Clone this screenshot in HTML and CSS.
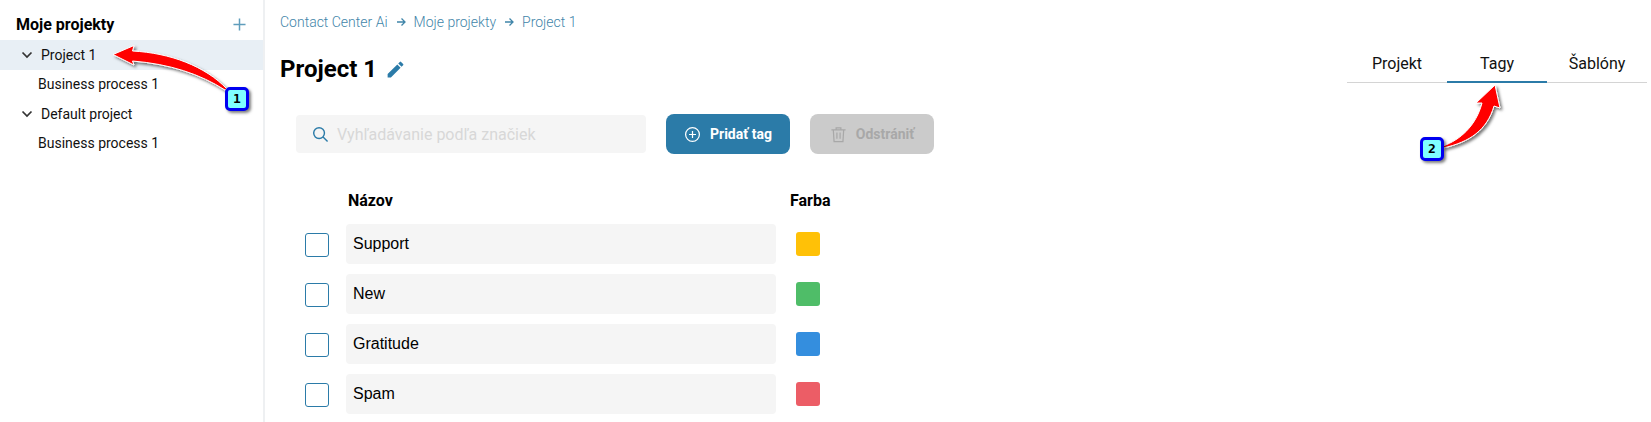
FILE: index.html
```html
<!DOCTYPE html>
<html lang="sk">
<head>
<meta charset="utf-8">
<title>Project 1</title>
<link rel="stylesheet" href="styles.css">
</head>
<body>
<div class="app">
  <aside class="sidebar">
    <div class="side-head">
      <span class="side-title">Moje projekty</span>
      <svg class="plus" viewBox="0 0 14 14"><path d="M7 0.5V13.5M0.5 7H13.5"/></svg>
    </div>
    <div class="tree-row active"><svg class="chev" viewBox="0 0 12 8"><path d="M1.5 1.5L6 6L10.5 1.5"/></svg><span>Project 1</span></div>
    <div class="tree-row child"><span>Business process 1</span></div>
    <div class="tree-row"><svg class="chev" viewBox="0 0 12 8"><path d="M1.5 1.5L6 6L10.5 1.5"/></svg><span>Default project</span></div>
    <div class="tree-row child"><span>Business process 1</span></div>
  </aside>
  <main class="main">
    <nav class="crumbs">
      <span>Contact Center Ai</span>
      <svg class="crumb-arrow" viewBox="0 0 10 10"><path d="M1 5H9M5.5 1.5L9 5L5.5 8.5"/></svg>
      <span>Moje projekty</span>
      <svg class="crumb-arrow" viewBox="0 0 10 10"><path d="M1 5H9M5.5 1.5L9 5L5.5 8.5"/></svg>
      <span>Project 1</span>
    </nav>
    <div class="title-row">
      <h1>Project 1</h1>
      <svg class="pencil" viewBox="0 0 24 24"><path d="M3 17.25V21h3.75L17.81 9.94l-3.75-3.75L3 17.25zM20.71 7.04a1 1 0 0 0 0-1.41l-2.34-2.34a1 1 0 0 0-1.41 0l-1.83 1.83 3.75 3.75 1.83-1.83z"/></svg>
    </div>
    <div class="toolbar">
      <div class="search">
        <svg class="search-icon" viewBox="0 0 18 18"><circle cx="7.5" cy="7.5" r="5.7"/><path d="M11.7 11.7L16.5 16.5"/></svg>
        <span>Vyhľadávanie podľa značiek</span>
      </div>
      <div class="btn primary">
        <svg class="btn-icon" viewBox="0 0 18 18"><circle cx="9" cy="9" r="7.3"/><path d="M9 5.3V12.7M5.3 9H12.7"/></svg>
        <span>Pridať tag</span>
      </div>
      <div class="btn disabled">
        <svg class="btn-icon" viewBox="0 0 18 18"><path d="M1.5 4H16.5M6.5 4V2H11.5V4M3.5 4L4.3 16.5H13.7L14.5 4M7.3 7V13.5M10.7 7V13.5"/></svg>
        <span>Odstrániť</span>
      </div>
    </div>
    <div class="tag-table">
      <div class="tag-head"><span class="head-name">Názov</span><span class="head-color">Farba</span></div>
      <div class="tag-row"><span class="check"></span><div class="field">Support</div><span class="swatch yellow"></span></div>
      <div class="tag-row"><span class="check"></span><div class="field">New</div><span class="swatch green"></span></div>
      <div class="tag-row"><span class="check"></span><div class="field">Gratitude</div><span class="swatch blue"></span></div>
      <div class="tag-row"><span class="check"></span><div class="field">Spam</div><span class="swatch red"></span></div>
    </div>
  </main>
  <div class="tabs">
    <div class="tab">Projekt</div>
    <div class="tab current">Tagy</div>
    <div class="tab">Šablóny</div>
  </div>
</div>

<svg class="callout-art" viewBox="0 0 1651 422">
  <defs>
    <filter id="sh" x="-20%" y="-20%" width="150%" height="150%"><feDropShadow dx="2" dy="2" stdDeviation="1.6" flood-color="#000" flood-opacity=".55"/></filter>
  </defs>
  <path class="arrow" d="M113 54.5L134 45.5L132.5 51C170 53 205 66 227 89L225 90C200 74 170 64 132.5 61L134 65Z"/>
  <path class="arrow" d="M1495 85L1500 108L1494 106C1487 130 1470 142 1443 148L1443 146C1460 140 1476 126 1482 103L1476 103Z"/>
</svg>
<div class="badge badge-one">1</div>
<div class="badge badge-two">2</div>
</body>
</html>
```

FILE: styles.css
```css
* { box-sizing: border-box; }
html, body { margin: 0; height: 422px; overflow: hidden; background: #fff; }
body { font-family: Roboto, sans-serif; color: #000; position: relative; }
.app { display: flex; height: 422px; width: 1651px; }

.sidebar { flex: 0 0 265px; border-right: 2px solid #eef0f2; padding-top: 9px; }
.side-head { display: flex; align-items: center; justify-content: space-between; height: 31px; padding: 0 17px 0 16px; }
.side-title { font-size: 16px; font-weight: 700; }
.plus { width: 13px; height: 13px; fill: none; stroke: #5f9dbc; stroke-width: 1.6; }
.tree-row { display: flex; align-items: center; height: 29.5px; font-size: 14px; color: #111; padding-left: 21px; }
.tree-row.active { background: #e8eff5; }
.tree-row.child { padding-left: 38px; }
.chev { width: 12px; height: 8px; margin-right: 8px; fill: none; stroke: #333; stroke-width: 1.7; }

.main { flex: 0 0 1082px; padding: 0 0 0 15px; }
.crumbs { display: flex; align-items: center; height: 21px; margin-top: 11px; font-size: 14px; font-weight: 300; color: #3f85a9; }
.crumb-arrow { width: 10px; height: 10px; margin: 0 8px; fill: none; stroke: #3f85a9; stroke-width: 1.3; }
.title-row { display: flex; align-items: center; height: 36px; margin-top: 19px; }
h1 { margin: 0; font-size: 24px; font-weight: 700; line-height: 36px; }
.pencil { width: 21px; height: 21px; margin-left: 8px; fill: #2b7ba8; }

.toolbar { display: flex; align-items: center; margin: 27px 0 0 16px; }
.search { display: flex; align-items: center; width: 350px; height: 38px; background: #f5f5f5; border-radius: 4px; padding-left: 16px; font-size: 16px; color: #d8d8d8; }
.search-icon { width: 17px; height: 17px; margin-right: 8px; fill: none; stroke: #2b7ba8; stroke-width: 1.5; }
.btn { display: flex; align-items: center; justify-content: center; width: 124px; height: 40px; border-radius: 8px; font-size: 14px; font-weight: 700; }
.primary { background: #2b7ba8; color: #fff; margin-left: 20px; }
.disabled { background: #cbcbcb; color: #a8a8a8; margin-left: 20px; }
.btn-icon { width: 17px; height: 17px; margin-right: 9px; fill: none; stroke: currentColor; stroke-width: 1.3; }

.tag-table { margin: 0 0 0 25px; font-family: "Liberation Sans", Arial, sans-serif; font-size: 16px; }
.tag-head { display: flex; height: 36px; align-items: center; margin-top: 28px; margin-bottom: -1px; font-family: Roboto, sans-serif; font-weight: 700; }
.head-name { margin-left: 43px; width: 442px; }
.tag-row { display: flex; align-items: center; height: 40px; margin: 7px 0 10px; }
.tag-row + .tag-row { margin-top: 0; }
.check { flex: none; width: 24px; height: 24px; border: 1.5px solid #2b7ba8; border-radius: 3px; margin-top: 1px; }
.field { width: 430px; height: 40px; margin-left: 17px; padding-left: 7px; background: #f5f5f5; border-radius: 4px; line-height: 39px; }
.swatch { flex: none; width: 24px; height: 24px; margin-left: 20px; border-radius: 3px; }
.yellow { background: #ffc107; }
.green { background: #4fbd68; }
.blue { background: #348ede; }
.red { background: #ec5d66; }

.tabs { display: flex; flex: none; align-self: flex-start; width: 300px; height: 32px; margin-top: 51px; border-bottom: 1px solid #d4d4d4; }
.tab { position: relative; width: 100px; font-size: 16px; color: #111; text-align: center; line-height: 26px; }
.tab.current::after { content: ""; position: absolute; left: 0; right: 0; bottom: -1px; height: 2px; background: #2b7ba8; }

.callout-art { position: absolute; left: 0; top: 0; width: 1651px; height: 422px; pointer-events: none; }
.arrow { fill: #f00; stroke: #fff; stroke-width: 1; filter: url(#sh); }
.badge { position: absolute; width: 24px; height: 24px; background: #7fffff; border: 3px solid #0000f0; border-radius: 5px; font-family: "DejaVu Sans Mono", monospace; font-size: 13px; font-weight: 700; line-height: 18px; text-align: center; box-shadow: 2px 2px 3px rgba(0,0,0,.5); }
.badge-one { left: 225px; top: 87px; }
.badge-two { left: 1420px; top: 137px; }
```
